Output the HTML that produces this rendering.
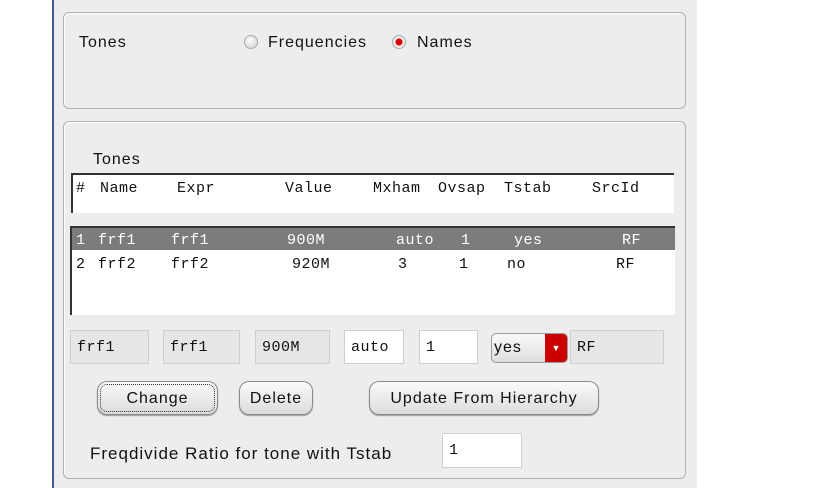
<!DOCTYPE html>
<html><head><style>
body{margin:0;width:832px;height:488px;background:#fff;position:relative;overflow:hidden;font-family:"Liberation Sans",sans-serif;font-size:16px;letter-spacing:1px;color:#111}
.a{position:absolute}
.panel{left:52px;top:0;width:643px;height:488px;background:#ededed;border-left:2px solid #3a5a9a}
.grp{border:1px solid #b0b0b0;border-radius:6px;box-shadow:inset 1px 1px 0 #fff}
.m{position:absolute;font-family:"Liberation Mono",monospace;font-size:15px;letter-spacing:0.5px;white-space:pre}
.fld{height:34px;border:1px solid #cfcfcf;box-sizing:border-box;line-height:34px;padding-left:6px;font-family:"Liberation Mono",monospace;font-size:15px;letter-spacing:0.5px}
.g{background:#e6e6e6}.w{background:#fff}
.btn{height:34px;box-sizing:border-box;border:1px solid #8a8a8a;border-radius:10px;background:linear-gradient(#fafafa,#dcdcdc);text-align:center;line-height:34px;font-size:16px;box-shadow:0 1px 1px #999}
.rad{width:12px;height:12px;border-radius:50%;border:1px solid #aaa;background:radial-gradient(circle at 40% 35%,#fff,#ccc)}
.wt{color:#fff}
</style></head><body>
<div class="a panel"></div>
<div class="a grp" style="left:63px;top:12px;width:621px;height:95px"></div>
<div class="a" style="left:79px;top:34px">Tones</div>
<div class="a rad" style="left:244px;top:35px"></div>
<div class="a" style="left:268px;top:34px">Frequencies</div>
<div class="a rad" style="left:392px;top:35px;background:radial-gradient(circle,#d00 0,#d00 3px,#eee 4px)"></div>
<div class="a" style="left:417px;top:34px">Names</div>

<div class="a grp" style="left:63px;top:121px;width:621px;height:356px"></div>
<div class="a" style="left:93px;top:151px">Tones</div>
<div class="a" style="left:71px;top:173px;width:603px;height:40px;background:#fff;border-top:2px solid #333;border-left:2px solid #333;box-sizing:border-box"></div>
<div class="m" style="left:76px;top:180px">#</div><div class="m" style="left:100px;top:180px">Name</div><div class="m" style="left:177px;top:180px">Expr</div><div class="m" style="left:285px;top:180px">Value</div><div class="m" style="left:373px;top:180px">Mxham</div><div class="m" style="left:438px;top:180px">Ovsap</div><div class="m" style="left:504px;top:180px">Tstab</div><div class="m" style="left:592px;top:180px">SrcId</div>
<div class="a" style="left:70px;top:226px;width:605px;height:89px;background:#fff;border-top:2px solid #333;border-left:2px solid #333;box-sizing:border-box"></div>
<div class="a" style="left:72px;top:228px;width:603px;height:22px;background:#7c7c7c"></div>
<div class="m wt" style="left:76px;top:232px">1</div><div class="m wt" style="left:98px;top:232px">frf1</div><div class="m wt" style="left:171px;top:232px">frf1</div><div class="m wt" style="left:287px;top:232px">900M</div><div class="m wt" style="left:396px;top:232px">auto</div><div class="m wt" style="left:461px;top:232px">1</div><div class="m wt" style="left:514px;top:232px">yes</div><div class="m wt" style="left:622px;top:232px">RF</div>
<div class="m" style="left:76px;top:256px">2</div><div class="m" style="left:98px;top:256px">frf2</div><div class="m" style="left:171px;top:256px">frf2</div><div class="m" style="left:292px;top:256px">920M</div><div class="m" style="left:398px;top:256px">3</div><div class="m" style="left:459px;top:256px">1</div><div class="m" style="left:507px;top:256px">no</div><div class="m" style="left:616px;top:256px">RF</div>

<div class="a fld g" style="left:70px;top:330px;width:79px">frf1</div>
<div class="a fld g" style="left:163px;top:330px;width:77px">frf1</div>
<div class="a fld g" style="left:255px;top:330px;width:75px">900M</div>
<div class="a fld w" style="left:344px;top:330px;width:60px;padding-left:6px">auto</div>
<div class="a fld w" style="left:419px;top:330px;width:59px">1</div>
<div class="a" style="left:491px;top:333px;width:77px;height:30px;border:1px solid #999;border-radius:5px;background:linear-gradient(#fafafa,#ddd);box-sizing:border-box;font-size:16px;line-height:28px;padding-left:2px">yes<div class="a" style="right:0;top:0;width:22px;height:28px;background:#c00;border-radius:0 4px 4px 0;color:#fff;font-size:9px;text-align:center;line-height:28px;letter-spacing:0">▼</div></div>
<div class="a fld g" style="left:570px;top:330px;width:94px">RF</div>

<div class="a btn" style="left:97px;top:381px;width:121px;outline:1px dotted #333;outline-offset:-4px">Change</div>
<div class="a btn" style="left:239px;top:381px;width:74px">Delete</div>
<div class="a btn" style="left:369px;top:381px;width:230px">Update From Hierarchy</div>
<div class="a" style="left:90px;top:444px;font-size:17px">Freqdivide Ratio for tone with Tstab</div>
<div class="a fld w" style="left:442px;top:433px;width:80px;height:35px">1</div>
</body></html>
